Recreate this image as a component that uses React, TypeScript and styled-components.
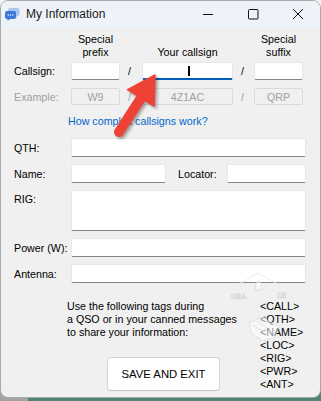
import * as React from "react";
import styled, {createGlobalStyle} from "styled-components";

const GlobalStyle = createGlobalStyle`
  html, body {
    margin: 0;
    padding: 0;
    width: 321px;
    height: 401px;
    overflow: hidden;
    background: linear-gradient(#f4f4f4, #f4f4f4) top / 100% 60% no-repeat,
                linear-gradient(to right, #a3a3a3 28px, #4e8376 28px);
    font-family: "Liberation Sans", Arial, sans-serif;
  }
  * {
    box-sizing: border-box;
  }
`

const Window = styled('div')`
  position: relative;
  width: 321px;
  height: 398px;
  border: 1px solid #a9a9a9;
  border-radius: 8px;
  background: #f0f0f0;
  overflow: hidden;
  display: flex;
  flex-direction: column;
`
const TitleBar = styled('div')`
  height: 26px;
  flex-shrink: 0;
  display: flex;
  align-items: center;
  background: #edf3f8;
  padding-left: 4px;
`
const TitleText = styled('span')`
  font-size: 12px;
  color: #1a1a1a;
  margin-left: 6px;
  flex: 1;
`
const CaptionButton = styled('div')`
  width: 45px;
  height: 26px;
  display: flex;
  align-items: center;
  justify-content: center;
`
const Content = styled('div')`
  padding: 0 14px 0 12px;
  font-size: 10.7px;
  color: #000;
`
const Row = styled('div')<{ $mt: number, $h?: number, $align?: string }>`
  display: flex;
  align-items: ${p => p.$align || 'center'};
  margin-top: ${p => p.$mt}px;
  height: ${p => p.$h ? `${p.$h}px` : 'auto'};
`
const Label = styled('div')<{ $w?: number, $muted?: boolean, $top?: boolean }>`
  width: ${p => p.$w || 58}px;
  flex-shrink: 0;
  color: ${p => p.$muted ? '#a0a0a0' : '#000'};
  padding-left: 1px;
  align-self: ${p => p.$top ? 'flex-start' : 'center'};
  padding-top: ${p => p.$top ? '3px' : '0'};
  white-space: nowrap;
`
const HeadCell = styled('div')<{ $w: number }>`
  width: ${p => p.$w}px;
  flex-shrink: 0;
  text-align: center;
  line-height: 13px;
  color: #000;
`
const Field = styled('div')<{ $w?: number, $focused?: boolean }>`
  position: relative;
  height: 100%;
  width: ${p => p.$w ? `${p.$w}px` : 'auto'};
  flex: ${p => p.$w ? '0 0 auto' : '1'};
  background: #fff;
  border: 1px solid #e6e6e6;
  border-bottom: ${p => p.$focused ? '2px solid #0060b8' : '1px solid #858585'};
  border-radius: 2px;
`
const Caret = styled('span')`
  position: absolute;
  left: 45px;
  top: 3px;
  width: 1.5px;
  height: 10px;
  background: #000;
`
const ExampleBox = styled('div')<{ $w: number }>`
  height: 100%;
  width: ${p => p.$w}px;
  border: 1px solid #dadada;
  border-radius: 2px;
  color: #a0a0a0;
  display: flex;
  align-items: center;
  justify-content: center;
`
const Slash = styled('div')<{ $w: number, $muted?: boolean }>`
  width: ${p => p.$w}px;
  flex-shrink: 0;
  padding-left: 8px;
  color: ${p => p.$muted ? '#a0a0a0' : '#000'};
`
const HelpLink = styled('a')`
  display: block;
  margin: 10px 0 0 55px;
  line-height: 13px;
  color: #0066cc;
  text-decoration: none;
`
const Gap = styled('div')<{ $w: number }>`
  width: ${p => p.$w}px;
  flex-shrink: 0;
`
const Bottom = styled('div')`
  display: flex;
  margin-top: 17px;
`
const InfoColumn = styled('div')`
  width: 192px;
  margin-left: 54px;
  flex-shrink: 0;
`
const InfoText = styled('p')`
  margin: 0;
  line-height: 13px;
  white-space: nowrap;
`
const SaveButton = styled('button')`
  display: block;
  margin: 18px 0 0 40px;
  width: 113px;
  height: 34px;
  background: #fff;
  border: 1px solid #d5d5d5;
  border-bottom-color: #c4c4c4;
  border-radius: 4px;
  font-family: inherit;
  font-size: 11.3px;
  color: #000;
  padding: 0;
`
const TagList = styled('div')`
  display: flex;
  flex-direction: column;
  line-height: 13px;
  margin-left: 1px;
`
const Overlay = styled('svg')`
  position: absolute;
  left: 0;
  top: 0;
  pointer-events: none;
`

const tags = ['<CALL>', '<QTH>', '<NAME>', '<LOC>', '<RIG>', '<PWR>', '<ANT>']

const AppIcon = () => <svg width="15" height="14" viewBox="0 0 15 14">
    <path d="M5 1h7.5a2 2 0 0 1 2 2v4a2 2 0 0 1-2 2H12v2l-2.2-2H5a2 2 0 0 1-2-2V3a2 2 0 0 1 2-2z" fill="#a9c7f0"/>
    <path d="M2 4h7a2 2 0 0 1 2 2v4a2 2 0 0 1-2 2H5l-2.5 2v-2H2a2 2 0 0 1-2-2V6a2 2 0 0 1 2-2z" fill="#3b78d8"/>
    <circle cx="3.3" cy="8" r=".7" fill="#fff"/>
    <circle cx="5.5" cy="8" r=".7" fill="#fff"/>
    <circle cx="7.7" cy="8" r=".7" fill="#fff"/>
</svg>

const App: React.FC = () => {
    return <>
        <GlobalStyle/>
        <Window>
            <TitleBar>
                <AppIcon/>
                <TitleText>My Information</TitleText>
                <CaptionButton>
                    <svg width="12" height="12" viewBox="0 0 12 12"><path d="M1 6.5h10" stroke="#111" strokeWidth="1"/></svg>
                </CaptionButton>
                <CaptionButton>
                    <svg width="12" height="12" viewBox="0 0 12 12"><rect x="1.5" y="1.5" width="9.5" height="9.5" rx="1" fill="none" stroke="#111" strokeWidth="1"/></svg>
                </CaptionButton>
                <CaptionButton>
                    <svg width="12" height="12" viewBox="0 0 12 12"><path d="M1 1l10 10M11 1L1 11" stroke="#111" strokeWidth="1"/></svg>
                </CaptionButton>
            </TitleBar>
            <Content>
                <Row $mt={6} $h={26} $align="flex-end">
                    <Gap $w={58}/>
                    <HeadCell $w={49}>Special<br/>prefix</HeadCell>
                    <Gap $w={22}/>
                    <HeadCell $w={91}>Your callsign</HeadCell>
                    <Gap $w={21}/>
                    <HeadCell $w={49}>Special<br/>suffix</HeadCell>
                </Row>
                <Row $mt={3} $h={18}>
                    <Label>Callsign:</Label>
                    <Field $w={49}/>
                    <Slash $w={22}>/</Slash>
                    <Field $w={91} $focused><Caret/></Field>
                    <Slash $w={21}>/</Slash>
                    <Field $w={49}/>
                </Row>
                <Row $mt={8} $h={17}>
                    <Label $muted>Example:</Label>
                    <ExampleBox $w={49}>W9</ExampleBox>
                    <Slash $w={22} $muted>/</Slash>
                    <ExampleBox $w={91}>4Z1AC</ExampleBox>
                    <Slash $w={21} $muted>/</Slash>
                    <ExampleBox $w={49}>QRP</ExampleBox>
                </Row>
                <HelpLink href="#">How complex callsigns work?</HelpLink>
                <Row $mt={10} $h={19}>
                    <Label>QTH:</Label>
                    <Field/>
                </Row>
                <Row $mt={7} $h={19}>
                    <Label>Name:</Label>
                    <Field $w={95}/>
                    <Gap $w={11}/>
                    <Label $w={50}>Locator:</Label>
                    <Field/>
                </Row>
                <Row $mt={7} $h={41}>
                    <Label $top>RIG:</Label>
                    <Field/>
                </Row>
                <Row $mt={7} $h={19}>
                    <Label>Power (W):</Label>
                    <Field/>
                </Row>
                <Row $mt={7} $h={19}>
                    <Label>Antenna:</Label>
                    <Field/>
                </Row>
                <Bottom>
                    <InfoColumn>
                        <InfoText>Use the following tags during</InfoText>
                        <InfoText>a QSO or in your canned messages</InfoText>
                        <InfoText>to share your information:</InfoText>
                        <SaveButton>SAVE AND EXIT</SaveButton>
                    </InfoColumn>
                    <TagList>
                        {tags.map(tag => <span key={tag}>{tag}</span>)}
                    </TagList>
                </Bottom>
            </Content>
            <Overlay width="321" height="398" viewBox="0 0 321 398">
                {/* faint watermark */}
                <g opacity="0.55" fill="#fff" stroke="#c9c9c9" strokeWidth="0.8">
                    <path d="M223 292 L257 272 L291 291" fill="none" strokeWidth="1.6" stroke="#fff"/>
                    <path d="M223 292 L257 272 L291 291" fill="none" strokeWidth="0.6"/>
                    <text x="230" y="298" fontSize="7" fontWeight="bold" fontFamily="Liberation Sans, sans-serif">UBA</text>
                    <text x="276" y="297" fontSize="6.5" fontWeight="bold" fontFamily="Liberation Sans, sans-serif">CE</text>
                    <path d="M255 285 a3 3 0 1 1 5 0 l1 4 h-7z"/>
                    <path d="M248 322 l14 -6 l16 10 l-4 10 l-12 4 l-12 -8z"/>
                    <path d="M252 324 l10 6 M256 320 l12 8" fill="none"/>
                </g>
                {/* red arrow */}
                <g style={{filter: 'drop-shadow(2px 2px 1.5px rgba(0,0,0,0.35))'}}>
                    <line x1="118" y1="131" x2="140" y2="97" stroke="#ee4237" strokeWidth="10" strokeLinecap="round"/>
                    <polygon points="154,74 153,105 126.6,88.7" fill="#ee4237" strokeLinejoin="round" stroke="#ee4237" strokeWidth="1.5"/>
                </g>
            </Overlay>
        </Window>
    </>
};

export default App;
